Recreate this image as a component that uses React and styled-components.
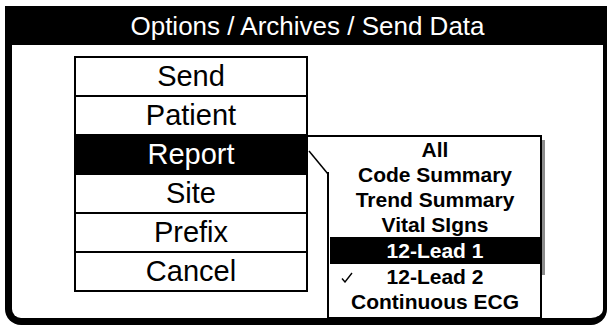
import React from "react";
import styled, { createGlobalStyle } from "styled-components";

const GlobalStyle = createGlobalStyle`
  html, body {
    margin: 0;
    padding: 0;
    background: #ffffff;
    overflow: hidden;
  }
  body {
    font-family: "Liberation Sans", Arial, Helvetica, sans-serif;
  }
`;

const Page = styled.div`
  width: 607px;
  height: 328px;
  padding: 6px 0 0 5px;
  box-sizing: border-box;
`;

const Frame = styled.div`
  width: 602px;
  height: 319px;
  box-sizing: border-box;
  border: 7px solid #000;
  border-top: 0;
  border-right-width: 4px;
  border-radius: 0 0 16px 16px;
  display: flex;
  flex-direction: column;
  background: #fff;
`;

const TitleBar = styled.div`
  height: 39px;
  background: #000;
  color: #fff;
  font-size: 26px;
  display: flex;
  align-items: center;
  justify-content: center;
  padding-top: 1px;
  box-sizing: border-box;
`;

const Body = styled.div`
  flex: 1;
  position: relative;
  padding: 11px 0 0 62px;
`;

const Menu = styled.div`
  width: 234px;
  border: 2px solid #000;
  box-sizing: border-box;
  display: flex;
  flex-direction: column;
`;

const MenuItem = styled.div`
  height: 37px;
  display: flex;
  align-items: center;
  justify-content: center;
  font-size: 29px;
  color: ${(props) => (props.selected ? "#fff" : "#000")};
  background: ${(props) => (props.selected ? "#000" : "#fff")};
  & + & {
    border-top: 2px solid #000;
  }
`;

const Popup = styled.div`
  position: absolute;
  left: 315px;
  top: 90px;
  width: 215px;
  height: 184px;
  box-sizing: border-box;
  border: 2px solid #000;
  border-left: 0;
  background: #fff;
  padding: 0 0 0 3px;
  display: flex;
  flex-direction: column;

  &::before {
    content: "";
    position: absolute;
    left: 0;
    top: 35px;
    bottom: 0;
    width: 2px;
    background: #000;
  }
`;

const Shadow = styled.span`
  position: absolute;
  right: -5px;
  top: 3px;
  width: 3px;
  height: 135px;
  background: #8c8c8c;
`;

const Callout = styled.svg`
  position: absolute;
  left: -20px;
  top: -2px;
  overflow: visible;
`;

const PopupItem = styled.div`
  position: relative;
  height: ${(props) => (props.selected ? 27 : 25)}px;
  display: flex;
  align-items: center;
  justify-content: center;
  font-size: 21px;
  font-weight: 700;
  color: ${(props) => (props.selected ? "#fff" : "#000")};
  background: ${(props) => (props.selected ? "#000" : "transparent")};
`;

const Check = styled.svg`
  position: absolute;
  left: 11px;
  top: 8px;
`;

const menuItems = ["Send", "Patient", "Report", "Site", "Prefix", "Cancel"];

const reportItems = [
  "All",
  "Code Summary",
  "Trend Summary",
  "Vital SIgns",
  "12-Lead 1",
  "12-Lead 2",
  "Continuous ECG",
];

export default function App() {
  return (
    <>
      <GlobalStyle />
      <Page>
        <Frame>
          <TitleBar>Options / Archives / Send Data</TitleBar>
          <Body>
            <Menu>
              {menuItems.map((item) => (
                <MenuItem key={item} selected={item === "Report"}>
                  {item}
                </MenuItem>
              ))}
            </Menu>
            <Popup>
              <Callout width="22" height="40">
                <rect x="0" y="0" width="22" height="2" fill="#000" />
                <line x1="2" y1="16" x2="21" y2="39" stroke="#000" strokeWidth="1.5" />
              </Callout>
              <Shadow />
              {reportItems.map((item) => (
                <PopupItem key={item} selected={item === "12-Lead 2" ? false : item === "12-Lead 1"}>
                  {item === "12-Lead 2" && (
                    <Check width="12" height="11" viewBox="0 0 12 11">
                      <path d="M1 6.5 L4 10 L11 1" fill="none" stroke="#000" strokeWidth="1.4" />
                    </Check>
                  )}
                  {item}
                </PopupItem>
              ))}
            </Popup>
          </Body>
        </Frame>
      </Page>
    </>
  );
}
